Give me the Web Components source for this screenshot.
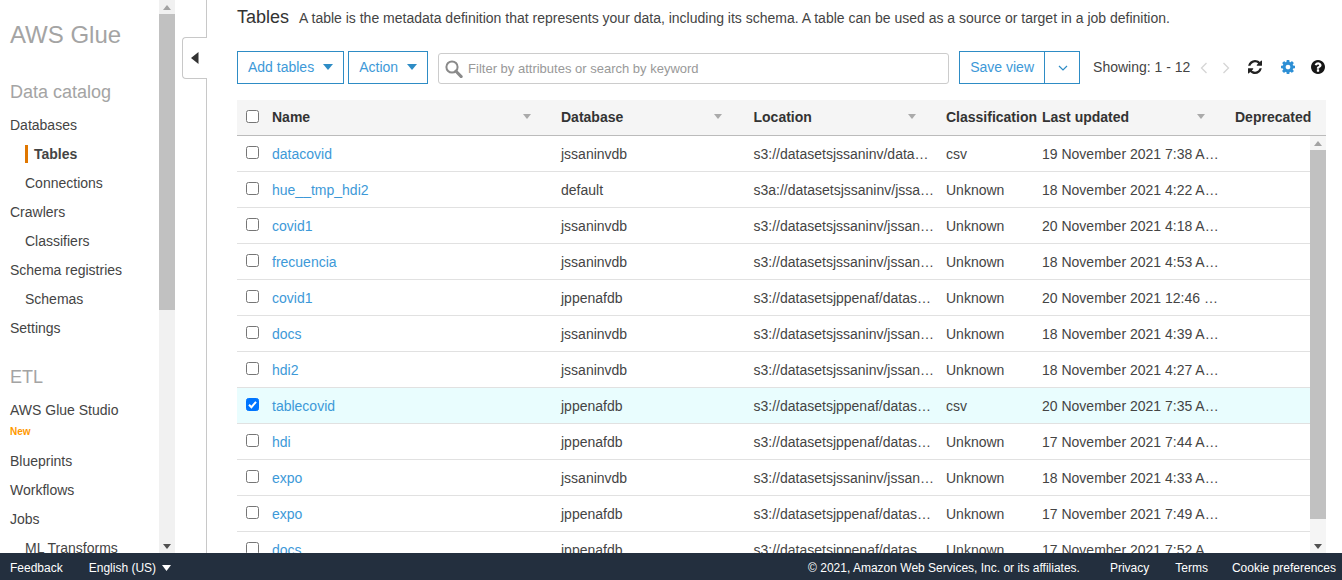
<!DOCTYPE html>
<html><head><meta charset="utf-8"><style>
html,body{margin:0;height:100%;overflow:hidden;background:#fff;font:14px/20px "Liberation Sans",Arial,sans-serif;color:#444}
</style></head><body>
<glue-app></glue-app>
<script>
const FONT='"Liberation Sans",Arial,sans-serif';
function def(name,css,html,init){
  customElements.define(name,class extends HTMLElement{
    constructor(){super();const r=this.attachShadow({mode:'open'});r.innerHTML='<style>'+css+'</style>'+(typeof html==='function'?html(this):html);}
    connectedCallback(){if(init&&!this._i){this._i=1;init(this);}}
  });
}
def('glue-scrollbar',`
:host{display:flex;flex-direction:column;width:16px;flex:none;background:#f1f1f1;height:100%;align-items:center}
.a{height:14px;flex:none;display:flex;align-items:center;justify-content:center;width:100%}
.t{flex:none;width:100%;background:#c1c1c1;height:var(--thumb,296px);margin:0 0 0 0}
.s{flex:1}
svg{display:block}
`,`<div class="a"><svg width="8" height="5"><path d="M4 0L8 5H0z" fill="#a3a3a3"/></svg></div><div class="t"></div><div class="s"></div><div class="a"><svg width="8" height="5"><path d="M0 0H8L4 5z" fill="#505050"/></svg></div>`);

def('nav-item',`
:host{display:block;height:29px;line-height:29px;font-size:14px;color:#444;white-space:nowrap;padding-left:10px}
:host([sub]){padding-left:25px}
:host([active]){padding-left:25px;font-weight:700}
:host([active]) span{display:block;border-left:3px solid #e07700;padding-left:6px;height:18px;line-height:18px;margin-top:0;position:relative;top:5px}
`,`<span><slot></slot></span>`);

def('glue-sidebar',`
:host{display:flex;width:175px;flex:none;height:100%;overflow:hidden}
.c{width:159px;flex:none;overflow:hidden;height:100%}
h1{font:400 24px/30px ${FONT};color:#a4a4a4;margin:0;padding:20px 0 0 10px}
h2{font:400 18px/24px ${FONT};color:#a4a4a4;margin:0;padding-left:10px}
.cat{margin-top:30px;margin-bottom:7px}
.etl{margin-top:22px;margin-bottom:7px}
.new{font:700 10px/12px ${FONT};color:#f90;padding-left:10px;margin-top:-1px;height:23px;padding-top:2px;box-sizing:border-box}
.studio{display:block}
`,`<div class="c"><h1>AWS Glue</h1>
<h2 class="cat">Data catalog</h2>
<nav-item>Databases</nav-item><nav-item active>Tables</nav-item><nav-item sub>Connections</nav-item>
<nav-item>Crawlers</nav-item><nav-item sub>Classifiers</nav-item><nav-item>Schema registries</nav-item><nav-item sub>Schemas</nav-item><nav-item>Settings</nav-item>
<h2 class="etl">ETL</h2>
<nav-item class="studio">AWS Glue Studio</nav-item><div class="new">New</div>
<nav-item>Blueprints</nav-item><nav-item>Workflows</nav-item><nav-item>Jobs</nav-item><nav-item sub>ML Transforms</nav-item>
</div><glue-scrollbar></glue-scrollbar>`);

def('collapse-gutter',`
:host{display:block;width:32px;flex:none;box-sizing:border-box;border-right:1px solid #c8c8c8;height:100%;position:relative}
.tab{position:absolute;left:7px;top:37px;width:25px;height:42px;box-sizing:border-box;background:#fff;border:1px solid #c8c8c8;border-right:0;border-radius:4px 0 0 4px;display:flex;align-items:center;justify-content:center;margin-right:-1px}
.tab i{position:absolute;right:-1px;top:0;bottom:0;width:1px;background:#fff}
`,`<div class="tab"><svg width="8" height="12"><path d="M7.5 0V12L0 6z" fill="#333"/></svg><i></i></div>`);

def('aws-btn',`
:host{display:inline-flex;align-items:center;box-sizing:border-box;height:33px;border:1px solid #2e8cc5;color:#3d99d8;font-size:14px;padding:0 10px 1px;background:#fff;white-space:nowrap;flex:none}
svg{margin-left:9px;display:block}
`,`<slot></slot><svg width="10" height="6"><path d="M0 0H10L5 6z" fill="#2e8cc5"/></svg>`);

def('save-view',`
:host{display:inline-flex;box-sizing:border-box;height:33px;border:1px solid #2e8cc5;color:#3d99d8;font-size:14px;flex:none;white-space:nowrap}
.l{width:85px;display:flex;align-items:center;justify-content:center;box-sizing:border-box;border-right:1px solid #2e8cc5;padding-bottom:1px}
.r{width:34px;display:flex;align-items:center;justify-content:center;padding-left:1px;box-sizing:border-box}
`,`<div class="l">Save view</div><div class="r"><svg width="10" height="6" fill="none"><path d="M1 1L5 5L9 1" stroke="#2e8cc5" stroke-width="1.2"/></svg></div>`);

def('search-box',`
:host{display:flex;align-items:center;box-sizing:border-box;height:31px;width:511px;flex:none;border:1px solid #ccc;border-radius:3px;font-size:13px;color:#999;padding-left:6px;background:#fff;white-space:nowrap;margin-top:2px}
svg{margin-right:5px;display:block;flex:none}
`,`<svg width="18" height="18" viewBox="0 0 18 18" fill="none" stroke="#8a8a8a"><circle cx="7" cy="7" r="5.6" stroke-width="2"/><path d="M11 11.2L16.2 16.6" stroke-width="3" stroke-linecap="round"/></svg>Filter by attributes or search by keyword`);

def('table-toolbar',`
:host{display:flex;align-items:center;height:33px;font-size:14px;color:#444}
.g{margin-left:4px}
search-box{margin-left:10px}
save-view{margin-left:10px}
.show{margin-left:13px;white-space:nowrap;color:#444;margin-top:-1px}
.ar{display:flex;margin-left:10px;gap:14px}
.ic{display:flex;align-items:center;margin-top:-1px}
.r{margin-left:18px}.s{margin-left:19px}.h{margin-left:16px}
svg{display:block}
`,`<aws-btn>Add tables</aws-btn><aws-btn class="g">Action</aws-btn><search-box></search-box><save-view></save-view>
<span class="show">Showing: 1 - 12</span>
<span class="ar"><svg width="8" height="12" fill="none" stroke="#d5d5d5" stroke-width="1.3"><path d="M6.5 1L1.5 6L6.5 11"/></svg><svg width="8" height="12" fill="none" stroke="#d5d5d5" stroke-width="1.3"><path d="M1.5 1L6.5 6L1.5 11"/></svg></span>
<span class="ic r"><svg width="14" height="14" viewBox="0 0 1536 1536"><path fill="#222" d="M1511 928q0 5-1 7-64 268-268 434.5T764 1536q-146 0-282.500-55T238 1324l-129 129q-19 19-45 19t-45-19-19-45V960q0-26 19-45t45-19h448q26 0 45 19t19 45-19 45l-137 137q71 66 161 102t187 36q134 0 250-65t186-179q11-17 53-117 8-23 30-23h192q13 0 22.500 9.500t9.500 22.500zm25-800v448q0 26-19 45t-45 19h-448q-26 0-45-19t-19-45 19-45l138-138Q969 256 768 256q-134 0-250 65T332 500q-11 17-53 117-8 23-30 23H50q-13 0-22.500-9.500T18 608v-7q65-268 270-434.500T768 0q146 0 284 55.500T1297 212l130-129q19-19 45-19t45 19 19 45z"/></svg></span>
<span class="ic s"><svg width="14" height="14" viewBox="0 0 1536 1536"><path fill="#2d8fd5" d="M1024 768q0-106-75-181t-181-75-181 75-75 181 75 181 181 75 181-75 75-181zm512-109v222q0 12-8 23t-20 13l-185 28q-19 54-39 91 35 50 107 138 10 12 10 25t-9 23q-27 37-99 108t-94 71q-12 0-26-9l-138-108q-44 23-91 38-16 136-29 186-7 28-36 28H657q-14 0-24.500-8.500T621 1506l-28-184q-49-16-90-37l-141 107q-10 9-25 9-14 0-25-11-126-114-165-168-7-10-7-23 0-12 8-23 15-21 51-66.500t54-70.500q-27-50-41-99L29 913q-13-2-21-12.500T0 877V655q0-12 8-23t19-13l186-28q14-46 39-92-40-57-107-138-10-12-10-24 0-10 9-23 26-36 98.500-107.500T337 135q13 0 26 10l138 107q44-23 91-38 16-136 29-186 7-28 36-28h222q14 0 24.500 8.500T915 30l28 184q49 16 90 37l142-107q9-9 24-9 13 0 25 10 129 119 165 170 7 8 7 22 0 12-8 23-15 21-51 66.500t-54 70.500q26 50 41 98l183 28q13 2 21 12.500t8 23.500z"/></svg></span>
<span class="ic h"><svg width="14" height="14" viewBox="0 0 1536 1536"><path fill="#161616" d="M896 1248v-192q0-14-9-23t-23-9H672q-14 0-23 9t-9 23v192q0 14 9 23t23 9h192q14 0 23-9t9-23zm256-672q0-88-55.500-163T958 297t-170-41q-243 0-371 213-15 24 8 42l132 100q7 6 19 6 16 0 25-12 53-68 86-92 34-24 86-24 48 0 85.500 26t37.500 59q0 38-20 61t-68 45q-63 28-115.500 86.500T640 885v36q0 14 9 23t23 9h192q14 0 23-9t9-23q0-19 21.500-49.500T972 822q32-18 49-28.500t46-35 44.500-48 28-60.500 12.500-81zm384 192q0 209-103 385.500T1153.500 1433 768 1536t-385.500-103T103 1153.500 0 768t103-385.500T382.500 103 768 0t385.500 103T1433 382.500 1536 768z"/></svg></span>`);

def('sort-caret',`:host{display:inline-block;width:0;height:0;border:4px solid transparent;border-top:5px solid #aaa;border-bottom:0;flex:none}`,'');

def('glue-check',`
:host{display:block;box-sizing:border-box;width:13px;height:13px;border:1px solid #767676;border-radius:2.5px;background:#fff;flex:none}
:host([checked]){background:#0075ff;border-color:#0075ff}
svg{display:none;margin:-1px}
:host([checked]) svg{display:block}
`,`<svg width="13" height="13" viewBox="0 0 13 13" fill="none"><path d="M3 6.800L5.400 9.200L10 3.800" stroke="#fff" stroke-width="2"/></svg>`);

const COLS='35px 289px 192.5px 192.5px 96px 193px 1fr';
def('table-head',`
:host{display:grid;grid-template-columns:${COLS};height:36px;box-sizing:border-box;background:#f5f5f5;border-bottom:1px solid #bbb;font-weight:700;color:#333;font-size:14px;align-items:center;white-space:nowrap;padding-bottom:2px}
.c{display:flex;align-items:center;justify-content:space-between;padding-right:32px;box-sizing:border-box;min-width:0}
.k{padding-left:9px}
.n{padding-right:30px}
.w{padding-right:30px}
`,`<div class="k"><glue-check></glue-check></div>
<div class="c n">Name<sort-caret></sort-caret></div><div class="c">Database<sort-caret></sort-caret></div><div class="c w">Location<sort-caret></sort-caret></div>
<div style="overflow:visible">Classification</div><div class="c w">Last updated<sort-caret></sort-caret></div><div>Deprecated</div>`);

def('table-row',`
:host{display:grid;grid-template-columns:${COLS};height:36px;box-sizing:border-box;border-bottom:1px solid #e1e1e1;align-items:center;white-space:nowrap;font-size:14px;color:#444;padding-top:1px;width:1089px;flex:none}
:host([selected]){background:#e9fdfe}
.k{padding-left:9px;margin-top:-3px}
a{color:#3d99d8;text-decoration:none}
`,el=>{const d=el.dataset;return `<div class="k"><glue-check ${el.hasAttribute('selected')?'checked':''}></glue-check></div><a>${d.n}</a><span>${d.d}</span><span>${d.l}</span><span>${d.c}</span><span>${d.u}</span><span></span>`});

const rows=[
['datacovid','jssaninvdb','s3://datasetsjssaninv/data…','csv','19 November 2021 7:38 A…'],
['hue__tmp_hdi2','default','s3a://datasetsjssaninv/jssa…','Unknown','18 November 2021 4:22 A…'],
['covid1','jssaninvdb','s3://datasetsjssaninv/jssan…','Unknown','20 November 2021 4:18 A…'],
['frecuencia','jssaninvdb','s3://datasetsjssaninv/jssan…','Unknown','18 November 2021 4:53 A…'],
['covid1','jppenafdb','s3://datasetsjppenaf/datas…','Unknown','20 November 2021 12:46 …'],
['docs','jssaninvdb','s3://datasetsjssaninv/jssan…','Unknown','18 November 2021 4:39 A…'],
['hdi2','jssaninvdb','s3://datasetsjssaninv/jssan…','Unknown','18 November 2021 4:27 A…'],
['tablecovid','jppenafdb','s3://datasetsjppenaf/datas…','csv','20 November 2021 7:35 A…',1],
['hdi','jppenafdb','s3://datasetsjppenaf/datas…','Unknown','17 November 2021 7:44 A…'],
['expo','jssaninvdb','s3://datasetsjssaninv/jssan…','Unknown','18 November 2021 4:33 A…'],
['expo','jppenafdb','s3://datasetsjppenaf/datas…','Unknown','17 November 2021 7:49 A…'],
['docs','jppenafdb','s3://datasetsjppenaf/datas…','Unknown','17 November 2021 7:52 A…']];

def('glue-table',`
:host{display:flex;flex-direction:column;flex:1;min-height:0}
.b{flex:1;min-height:0;position:relative;overflow:hidden}
.rows{display:flex;flex-direction:column;height:100%;overflow:hidden}
glue-scrollbar{position:absolute;right:0;top:0;height:100%;--thumb:369px;background:#f5f5f5}
`,`<table-head></table-head><div class="b"><div class="rows">${rows.map(r=>`<table-row ${r[5]?'selected':''} data-n="${r[0]}" data-d="${r[1]}" data-l="${r[2]}" data-c="${r[3]}" data-u="${r[4]}"></table-row>`).join('')}</div><glue-scrollbar></glue-scrollbar></div>`);

def('glue-main',`
:host{display:flex;flex-direction:column;flex:1;min-width:0;padding:0 16px 0 30px;height:100%;box-sizing:border-box}
.t{display:flex;align-items:baseline;height:38px;padding-top:7px;margin-bottom:13px;box-sizing:border-box;white-space:nowrap;color:#444;font-size:14px}
.t h3{font:400 18px/20px ${FONT};color:#333;margin:0 10px 0 0}
table-toolbar{margin-bottom:16px}
`,`<div class="t"><h3>Tables</h3><span>A table is the metadata definition that represents your data, including its schema. A table can be used as a source or target in a job definition.</span></div><table-toolbar></table-toolbar><glue-table></glue-table>`);

def('glue-footer',`
:host{display:flex;align-items:center;height:27px;flex:none;background:#232f3e;color:#fff;font-size:12px;white-space:nowrap;padding:2px 6px 0 10px;box-sizing:border-box}
.l{margin-left:26px;display:flex;align-items:center}
.l svg{margin-left:6px;display:block}
.sp{flex:1}
.p{margin-left:30px}.tm{margin-left:26px}.ck{margin-left:24px}
`,`<span class="f">Feedback</span><span class="l">English (US)<svg width="9" height="6"><path d="M0 0H9L4.500 6z" fill="#fff"/></svg></span><span class="sp"></span><span>© 2021, Amazon Web Services, Inc. or its affiliates.</span><span class="p">Privacy</span><span class="tm">Terms</span><span class="ck">Cookie preferences</span>`);

def('glue-app',`
:host{display:flex;flex-direction:column;height:580px;overflow:hidden}
.m{display:flex;flex:1;min-height:0}
`,`<div class="m"><glue-sidebar></glue-sidebar><collapse-gutter></collapse-gutter><glue-main></glue-main></div><glue-footer></glue-footer>`);
</script></body></html>
